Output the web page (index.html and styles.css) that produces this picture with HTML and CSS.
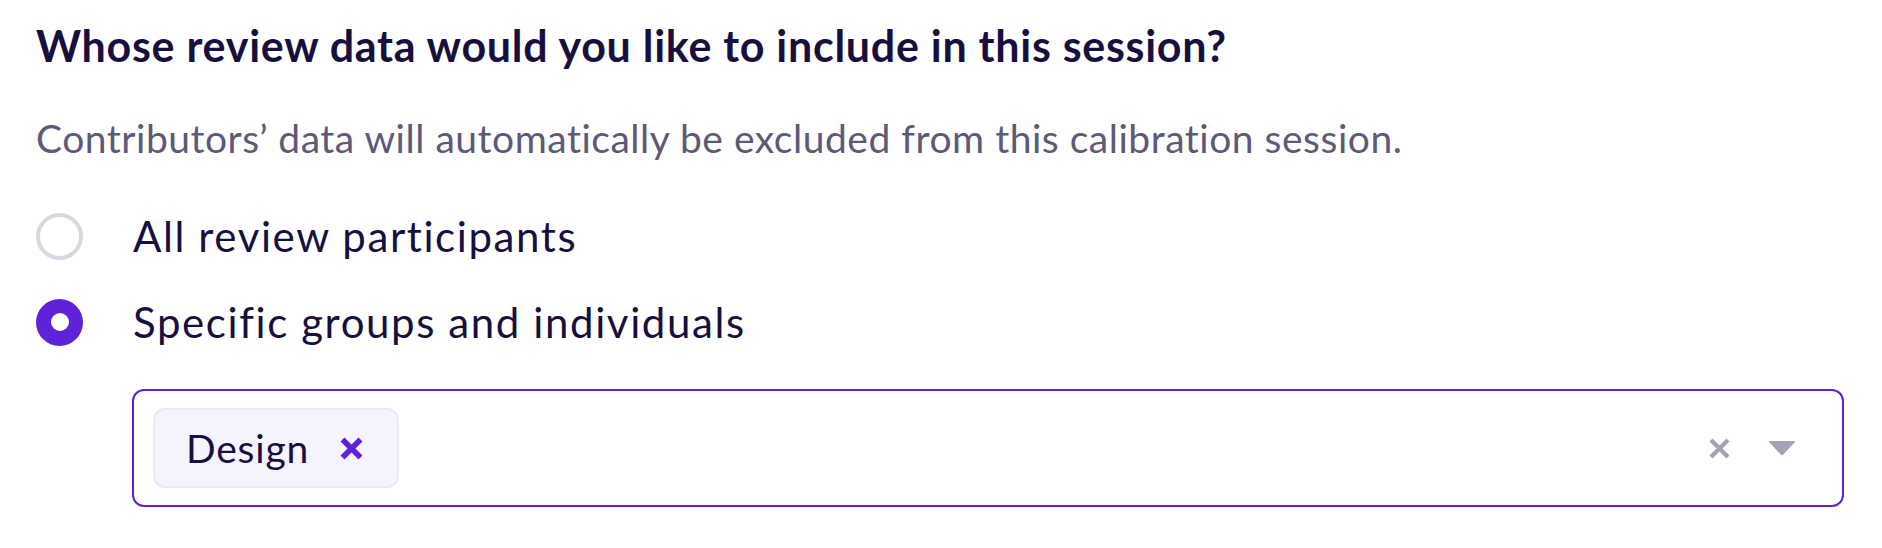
FILE: index.html
```html
<!DOCTYPE html>
<html lang="en">
<head>
<meta charset="utf-8">
<title>Calibration session participants</title>
<link rel="stylesheet" href="styles.css">
</head>
<body>
<main class="panel">
  <h2 class="title">Whose review data would you like to include in this session?</h2>
  <p class="hint">Contributors’ data will automatically be excluded from this calibration session.</p>
  <div class="options">
    <label class="option">
      <span class="radio"></span>
      <span class="option-text">All review participants</span>
    </label>
    <label class="option">
      <span class="radio radio-checked"><span class="radio-dot"></span></span>
      <span class="option-text">Specific groups and individuals</span>
    </label>
  </div>
  <div class="select">
    <div class="chips">
      <span class="chip">
        <span class="chip-text">Design</span>
        <svg class="chip-x" width="23" height="23" viewBox="0 0 23 23" aria-hidden="true">
          <path d="M2.5 2.5 L20.5 20.5 M20.5 2.5 L2.5 20.5" stroke="currentColor" stroke-width="5.6" fill="none"/>
        </svg>
      </span>
    </div>
    <div class="indicators">
      <svg class="clear-x" width="21" height="21" viewBox="0 0 21 21" aria-hidden="true">
        <path d="M2 2 L19 19 M19 2 L2 19" stroke="currentColor" stroke-width="4.4" fill="none"/>
      </svg>
      <svg class="caret" width="28" height="16" viewBox="0 0 28 16" aria-hidden="true">
        <path d="M2 1 L26 1 Q27.8 1 26.6 2.4 L15.3 14.6 Q14 16 12.7 14.6 L1.4 2.4 Q0.2 1 2 1 Z" fill="currentColor"/>
      </svg>
    </div>
  </div>
</main>
</body>
</html>
```

FILE: styles.css
```css
* {
  box-sizing: border-box;
}

html, body {
  margin: 0;
  padding: 0;
  background: #ffffff;
}

body {
  font-family: "Lato", "Noto Sans", sans-serif;
  color: #17103f;
}

.panel {
  padding: 20px 38px 0 36px;
}

.title {
  margin: 0;
  font-size: 43px;
  line-height: 52px;
  font-weight: 700;
  letter-spacing: 0.72px;
  color: #17103f;
}

.hint {
  margin: 42px 0 0 0;
  font-size: 39px;
  line-height: 48px;
  font-weight: 400;
  letter-spacing: 0.52px;
  color: #5d5979;
}

.options {
  margin-top: 49px;
  display: flex;
  flex-direction: column;
  gap: 36px;
}

.option {
  display: flex;
  align-items: center;
  gap: 50px;
}

.radio {
  flex: 0 0 auto;
  width: 47px;
  height: 47px;
  border-radius: 50%;
  border: 4px solid #d8d8de;
  background: #ffffff;
  display: flex;
  align-items: center;
  justify-content: center;
}

.radio-checked {
  border: none;
  background: #6022d8;
}

.radio-dot {
  width: 18px;
  height: 18px;
  border-radius: 50%;
  background: #ffffff;
}

.option-text {
  font-size: 42px;
  line-height: 50px;
  letter-spacing: 1.6px;
  color: #17103f;
}

.select {
  margin: 42px 0 0 96px;
  height: 118px;
  border: 2px solid #6022d8;
  border-radius: 12px;
  display: flex;
  align-items: center;
  justify-content: space-between;
  padding: 0 46px 0 19px;
}

.chips {
  display: flex;
  align-items: center;
}

.chip {
  display: flex;
  align-items: center;
  gap: 31px;
  height: 80px;
  padding: 0 34px 0 31px;
  background: #f5f3fd;
  border: 2px solid #ece8f9;
  border-radius: 12px;
}

.chip-text {
  font-size: 39px;
  line-height: 48px;
  letter-spacing: 0.8px;
  color: #17103f;
}

.chip-x {
  color: #6022d8;
  display: block;
}

.indicators {
  display: flex;
  align-items: center;
  gap: 38px;
  color: #a6a1b4;
}

.clear-x,
.caret {
  display: block;
}
```
